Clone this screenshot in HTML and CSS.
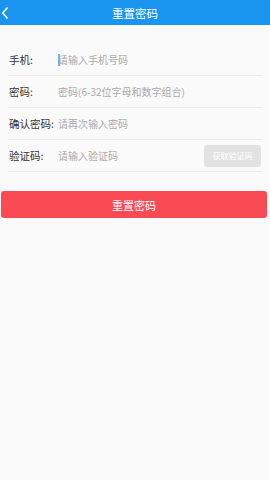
FILE: index.html
```html
<!DOCTYPE html>
<html lang="zh">
<head>
    <meta charset="UTF-8">
    <meta name="viewport" content="width=device-width, initial-scale=1.0">
    <title>重置密码</title>
    <link rel="stylesheet" href="styles.css">
</head>
<body>

<div class="header">
    <svg class="back" viewBox="0 0 8 14"><path d="M6.5 1.5 L1.8 7 L6.5 12.5" fill="none" stroke="#fff" stroke-width="1.6"/></svg>
    <span class="title">重置密码</span>
</div>

<div class="form">
    <div class="row">
        <label>手机:</label>
        <span class="cursor"></span>
        <input type="text" placeholder="请输入手机号码">
    </div>
    <div class="row">
        <label>密码:</label>
        <input type="password" placeholder="密码(6-32位字母和数字组合)">
    </div>
    <div class="row">
        <label>确认密码:</label>
        <input type="password" placeholder="请再次输入密码">
    </div>
    <div class="row">
        <label>验证码:</label>
        <input type="text" placeholder="请输入验证码">
        <button class="code-button">获取验证码</button>
    </div>
</div>

<button class="submit">重置密码</button>

</body>
</html>
```

FILE: styles.css
```css
body {
    margin: 0;
    background-color: #fafafa;
    font-family: "Noto Sans CJK SC", "Noto Sans", sans-serif;
    color: #333;
}

/* 顶部标题栏 */
.header {
    height: 25px;
    background-color: #1a95ef;
    display: flex;
    align-items: center;
    justify-content: center;
    position: relative;
}

.back {
    position: absolute;
    left: 1px;
    top: 6px;
    width: 8px;
    height: 14px;
}

.title {
    color: #fff;
    font-size: 11.5px;
}

/* 表单 */
.form {
    padding: 19px 8px 0 8px;
}

.row {
    height: 31px;
    border-bottom: 1px solid #eaeaea;
    display: flex;
    align-items: center;
    position: relative;
}

.row label {
    width: 49px;
    padding-left: 1px;
    font-size: 10.5px;
    color: #333;
}

.row input {
    flex: 1;
    min-width: 0;
    border: none;
    background: transparent;
    font-family: inherit;
    font-size: 10px;
    padding: 0;
    outline: none;
}

.row input::placeholder {
    color: #aaa;
}

.cursor {
    position: absolute;
    left: 50px;
    top: 10px;
    width: 2px;
    height: 12px;
    background-color: #6cb8f0;
}

.code-button {
    width: 57px;
    height: 22px;
    margin-right: 1px;
    border: none;
    border-radius: 3px;
    background-color: #e2e2e2;
    color: #fff;
    font-family: inherit;
    font-size: 8px;
    padding: 0;
}

/* 提交按钮 */
.submit {
    display: block;
    width: 266px;
    height: 27px;
    margin: 19px 0 0 1px;
    border: none;
    border-radius: 3px;
    background-color: #fa4b55;
    color: #fff;
    font-family: inherit;
    font-size: 11px;
}
```
